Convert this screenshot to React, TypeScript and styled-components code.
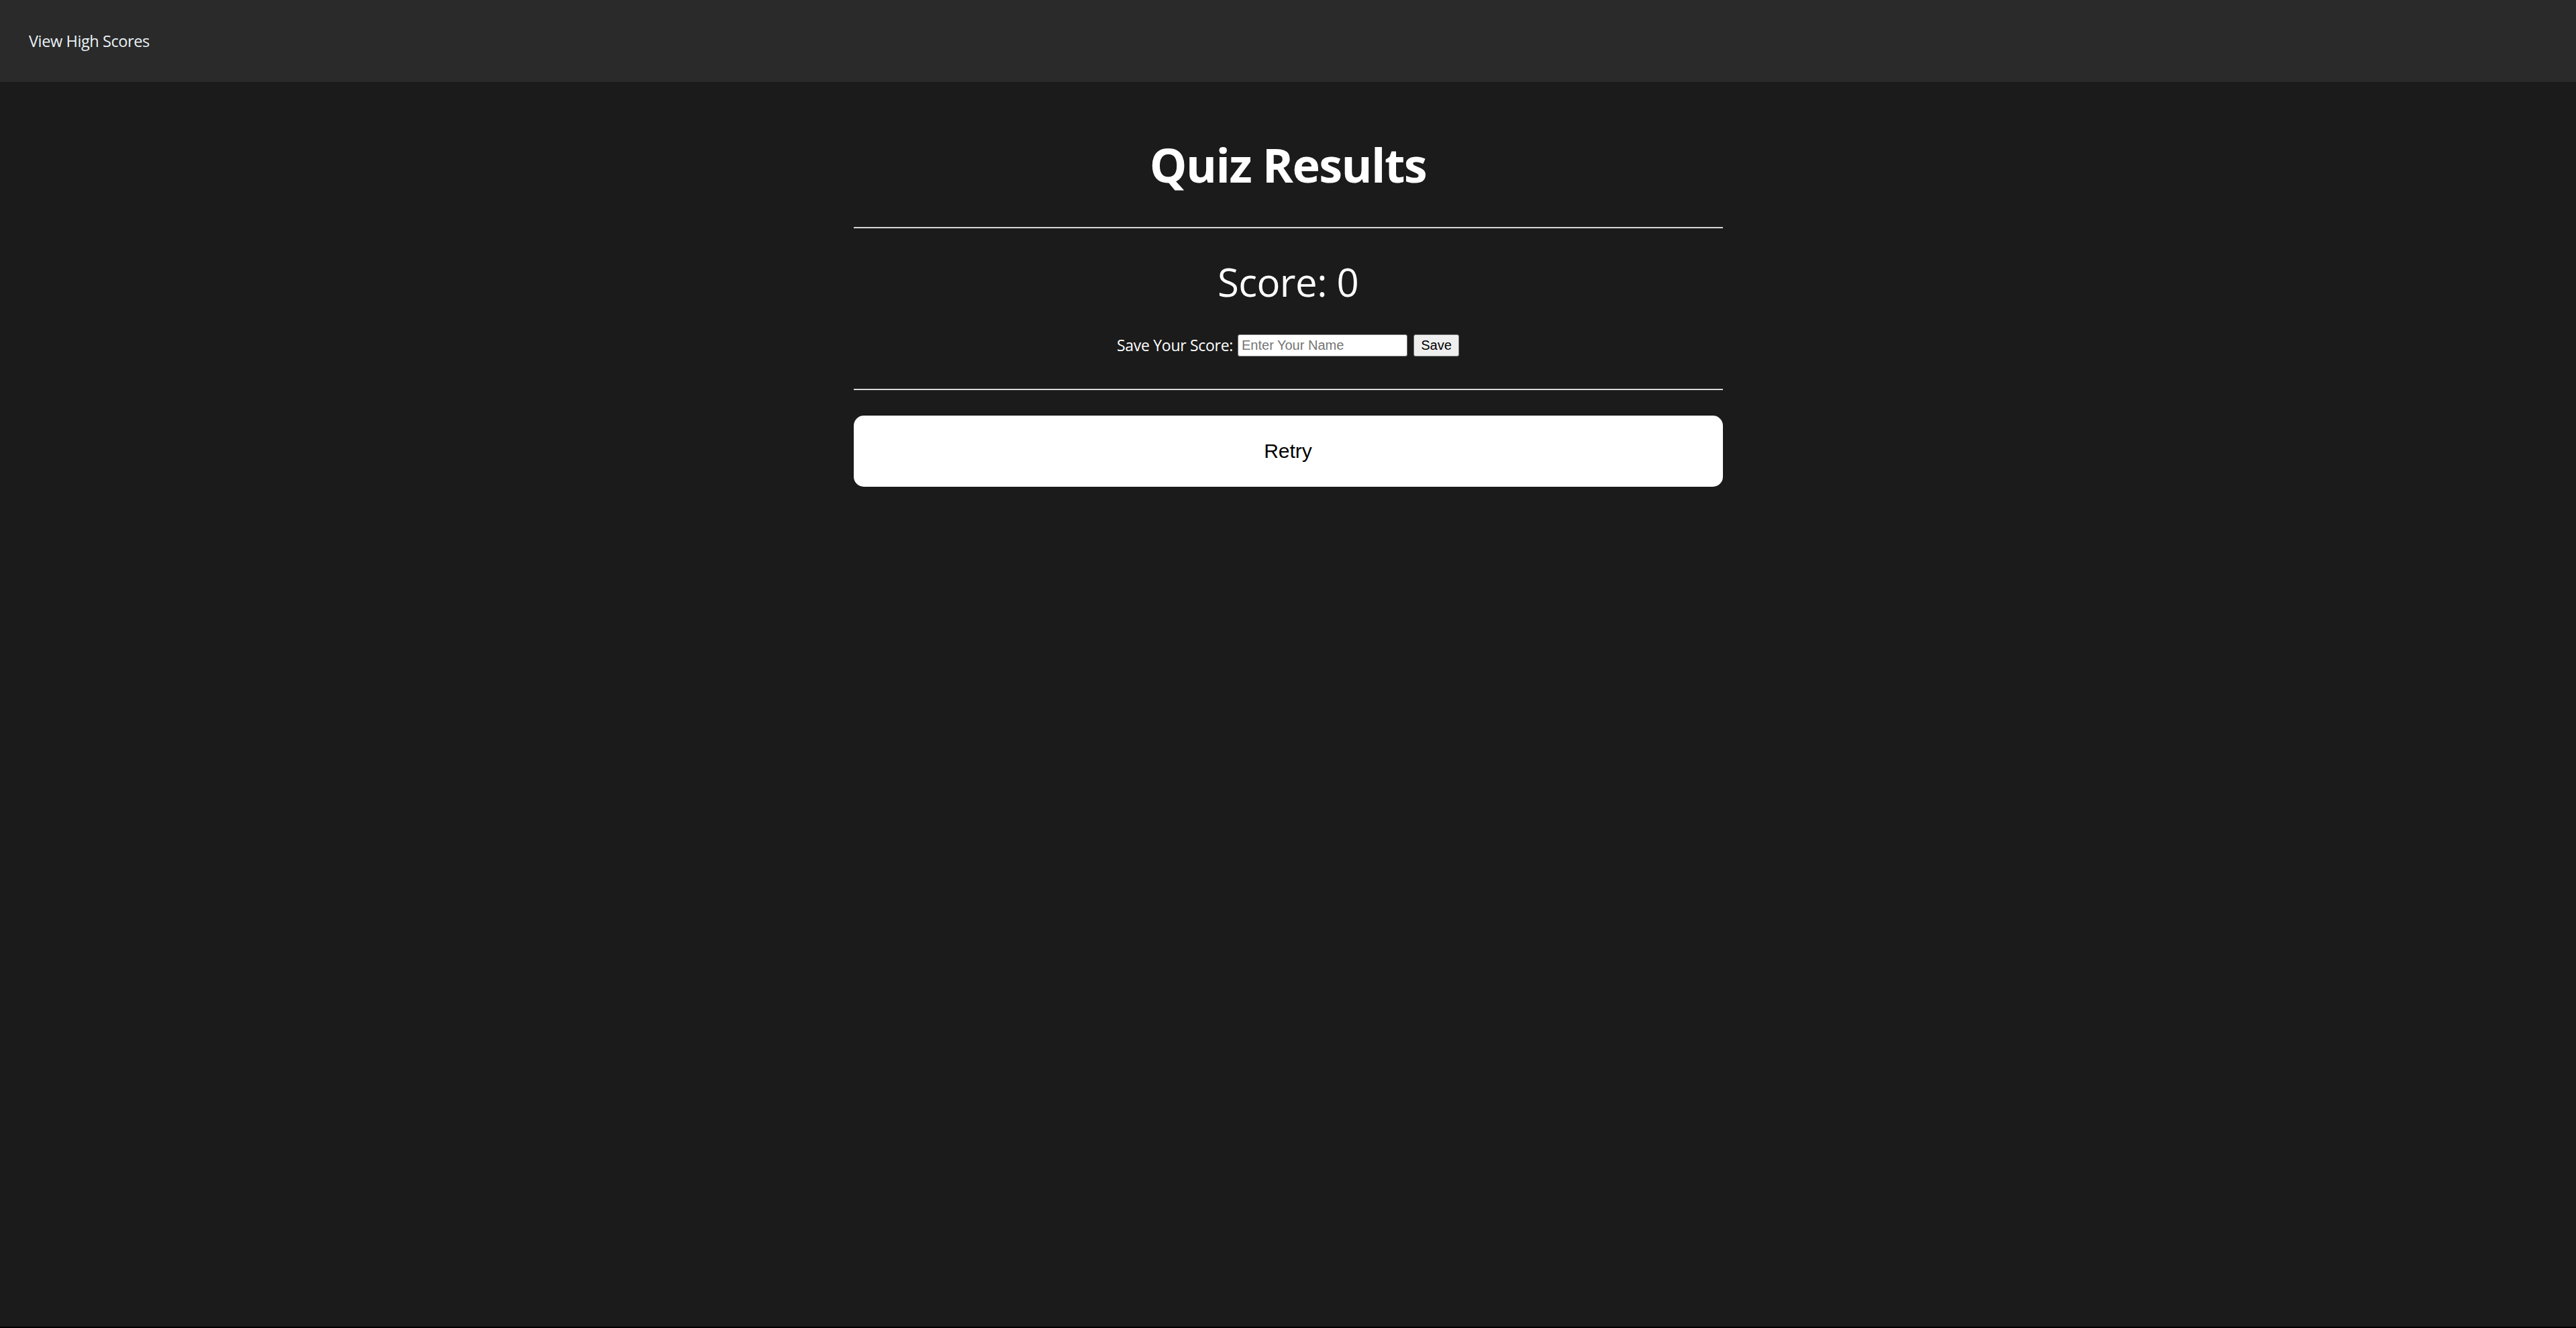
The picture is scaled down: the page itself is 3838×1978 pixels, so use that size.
import React from "react";
import styled, { createGlobalStyle } from "styled-components";

const GlobalStyle = createGlobalStyle`
  html { background: #000; }
  body {
    margin: 0;
    background: #1b1b1b;
    font-family: "Open Sans", "Noto Sans", sans-serif;
    color: #fff;
  }
`;

const Page = styled.div`
  height: 1976px;
  background: #1b1b1b;
  display: flex;
  flex-direction: column;
`;

const Header = styled.header`
  height: 122px;
  background: #2a2a2a;
  display: flex;
  align-items: center;
  padding-left: 43px;
  box-sizing: border-box;
`;

const HeaderLink = styled.a`
  font-size: 23.5px;
  color: #eaf2f7;
  text-decoration: none;
  cursor: pointer;
  letter-spacing: -0.4px;
`;

const Main = styled.main`
  width: 1295px;
  margin: 0 auto;
  display: flex;
  flex-direction: column;
  align-items: stretch;
`;

const Title = styled.h1`
  margin: 81px 0 0;
  font-size: 70px;
  line-height: 84px;
  font-weight: 700;
  text-align: center;
  letter-spacing: -1.5px;
`;

const Rule = styled.hr<{ $top: number }>`
  margin: ${(p) => p.$top}px 0 0;
  height: 0;
  border: none;
  border-top: 1px solid #bdbdbd;
  border-bottom: 1px solid #f0f0f0;
`;

const Score = styled.h2`
  margin: 45px 0 0;
  font-size: 58px;
  line-height: 70px;
  font-weight: 400;
  text-align: center;
  letter-spacing: -0.5px;
`;

const SaveRow = styled.form`
  margin-top: 43px;
  display: flex;
  justify-content: center;
  align-items: center;
  height: 33px;
`;

const SaveLabel = styled.label`
  font-size: 23px;
  line-height: 33px;
  margin-right: 7px;
  letter-spacing: -0.3px;
`;

const NameInput = styled.input`
  box-sizing: border-box;
  width: 253px;
  height: 33px;
  padding: 1px 5px;
  font-family: "Liberation Sans", Arial, sans-serif;
  font-size: 20px;
  color: #000;
  background: #fff;
  border: 1px solid #767676;
  border-radius: 3px;
  margin-right: 9px;
  &::placeholder { color: #757575; }
`;

const SaveButton = styled.button`
  box-sizing: border-box;
  width: 68px;
  height: 33px;
  padding: 0;
  font-family: "Liberation Sans", Arial, sans-serif;
  font-size: 20px;
  color: #000;
  background: #efefef;
  border: 1px solid #767676;
  border-radius: 3px;
`;

const RetryButton = styled.button`
  margin-top: 38px;
  height: 106px;
  background: #fff;
  color: #000;
  border: none;
  border-radius: 15px;
  font-family: "Liberation Sans", Arial, sans-serif;
  font-size: 30px;
  cursor: pointer;
`;

export default function App() {
  return (
    <>
      <GlobalStyle />
      <Page>
        <Header>
          <HeaderLink>View High Scores</HeaderLink>
        </Header>
        <Main>
          <Title>Quiz Results</Title>
          <Rule $top={51} />
          <Score>Score: 0</Score>
          <SaveRow onSubmit={(e) => e.preventDefault()}>
            <SaveLabel htmlFor="name">Save Your Score:</SaveLabel>
            <NameInput id="name" placeholder="Enter Your Name" />
            <SaveButton type="submit">Save</SaveButton>
          </SaveRow>
          <Rule $top={48} />
          <RetryButton>Retry</RetryButton>
        </Main>
      </Page>
    </>
  );
}
